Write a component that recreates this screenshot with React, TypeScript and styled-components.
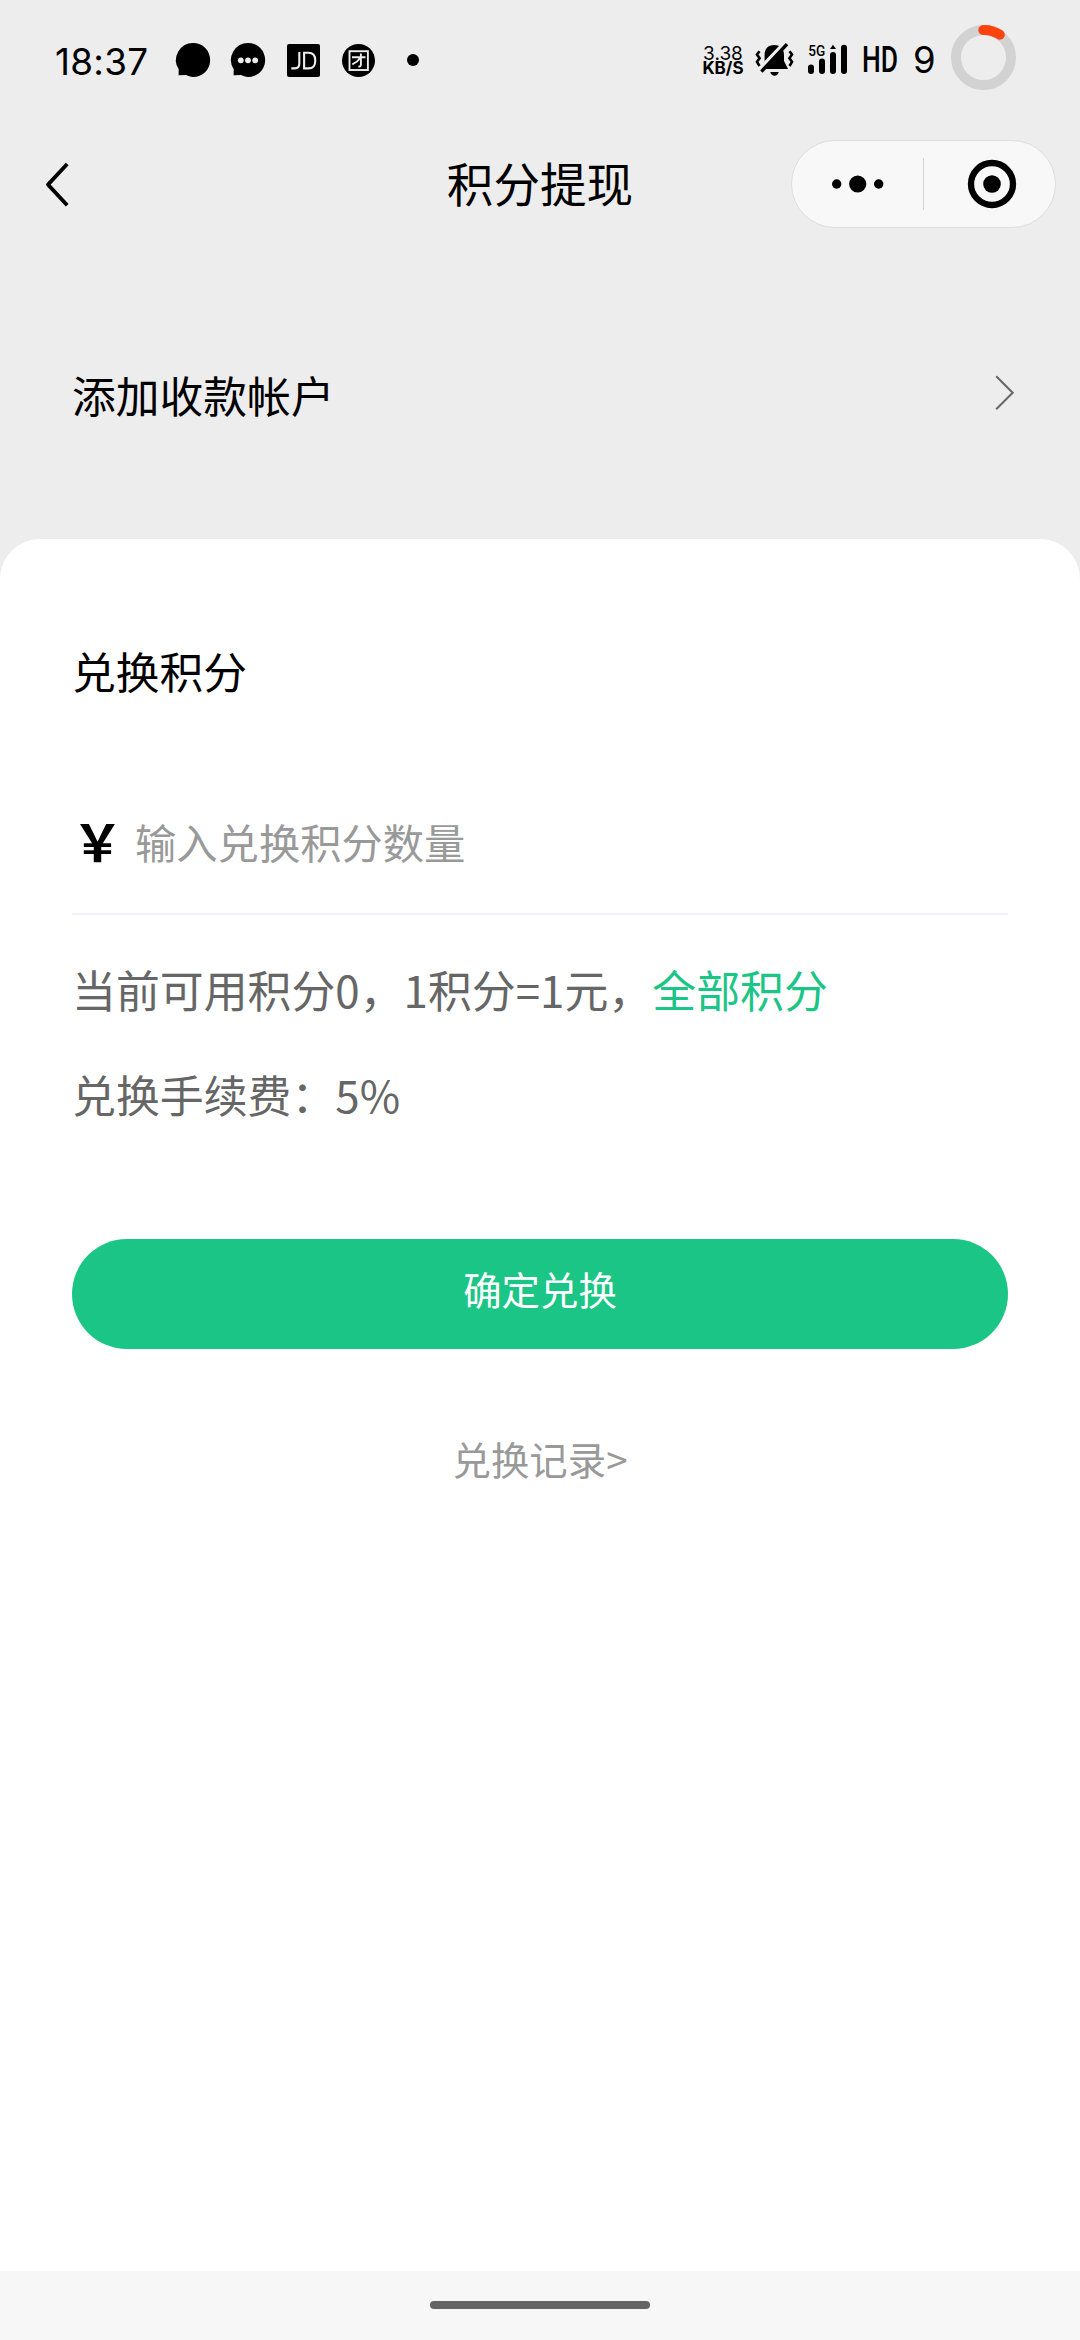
import React from "react";
import styled, { createGlobalStyle } from "styled-components";

const cjk = `"Noto Sans CJK SC", sans-serif`;
const latin = `Inter, "Noto Sans CJK SC", sans-serif`;

const GlobalStyle = createGlobalStyle`
  * { box-sizing: border-box; }
  body { margin: 0; background: #ededed; }
`;

const Screen = styled.div`
  width: 1080px;
  height: 2340px;
  display: flex;
  flex-direction: column;
  overflow: hidden;
  background: #ededed;
  color: #000;
  font-family: ${cjk};
`;

const StatusBar = styled.header`
  height: 120px;
  flex: none;
  display: flex;
  justify-content: space-between;
  padding: 0 64px 0 55px;
  font-family: ${latin};
`;

const StatusGroup = styled.div`
  display: flex;
  align-items: center;
  height: 120px;
`;

const Clock = styled.span`
  width: 121px;
  padding-top: 3px;
  font-size: 36.8px;
  font-weight: 400;
  line-height: 44px;
  letter-spacing: 0.3px;
  white-space: nowrap;
`;

const Icon = styled.svg<{ $gap?: number }>`
  display: block;
  flex: none;
  margin-right: ${(p) => p.$gap ?? 0}px;
  overflow: visible;
`;

const Speed = styled.div`
  display: flex;
  flex-direction: column;
  align-items: center;
  width: 42px;
  margin-right: 11px;
  padding-top: 2px;
`;

const SpeedLine = styled.span<{ $bold?: boolean }>`
  font-size: ${(p) => (p.$bold ? 17 : 19)}px;
  font-weight: ${(p) => (p.$bold ? 700 : 400)};
  line-height: 15.4px;
  white-space: nowrap;
`;

const Level = styled.span`
  width: 38px;
  font-size: 36.5px;
  line-height: 44px;
  font-weight: 400;
`;

const NavBar = styled.nav`
  height: 129px;
  flex: none;
  display: grid;
  grid-template-columns: 289px 1fr 265px;
  align-items: center;
  padding: 0 24px 0 0;
`;

const BackButton = styled.button`
  border: 0;
  background: none;
  padding: 0 0 0 44px;
  height: 60px;
`;

const Title = styled.h1`
  margin: 0;
  padding-bottom: 5px;
  font-size: 46.6px;
  font-weight: 400;
  line-height: 60px;
  text-align: center;
`;

const Capsule = styled.div`
  height: 88px;
  margin-bottom: 2px;
  display: grid;
  grid-template-columns: 1fr 1px 1fr;
  align-items: center;
  justify-items: center;
  border: 1px solid #dedede;
  border-radius: 44px;
  background: #f8f8f8;
`;

const CapsuleDivider = styled.span`
  width: 1px;
  height: 52px;
  background: #d4d4d4;
`;

const AccountRow = styled.section`
  height: 290px;
  flex: none;
  display: flex;
  align-items: center;
  justify-content: space-between;
  padding: 0 64px 1px 72px;
`;

const Label = styled.h2`
  margin: 0;
  font-size: 43.75px;
  font-weight: 400;
  line-height: 64px;
`;

const Sheet = styled.main`
  flex: 1;
  display: flex;
  flex-direction: column;
  padding: 99px 72px 0;
  border-radius: 40px 40px 0 0;
  background: #fff;
`;

const AmountField = styled.div`
  display: flex;
  align-items: center;
  height: 144px;
  margin-top: 69px;
  padding-bottom: 3px;
  border-bottom: 2px solid #f2f0ff;
`;

const Currency = styled.span`
  width: 63px;
  padding-bottom: 2px;
  font: 700 51px/60px ${cjk};
`;

const Placeholder = styled.span`
  font-size: 41.3px;
  line-height: 60px;
  color: #999;
`;

const Note = styled.p<{ $top: number }>`
  margin: ${(p) => p.$top}px 0 0;
  font-size: 43.9px;
  line-height: 64px;
  color: #666;
  white-space: nowrap;
`;

const Link = styled.span`
  color: #1bc586;
`;

const Submit = styled.button`
  height: 110px;
  margin-top: 113px;
  padding: 0 0 13px;
  border: 0;
  border-radius: 55px;
  background: #1bc586;
  color: #fff;
  font: 400 38.4px/56px ${cjk};
`;

const History = styled.a`
  margin-top: 81px;
  font-size: 38.4px;
  line-height: 56px;
  text-align: center;
  color: #999;
`;

const HomeBar = styled.footer`
  height: 69px;
  flex: none;
  display: flex;
  justify-content: center;
  padding-top: 30px;
  background: #f7f7f7;
`;

const HomePill = styled.span`
  width: 220px;
  height: 8px;
  border-radius: 4px;
  background: #646464;
`;

const BUBBLE =
  "M17.3 0A17 17 0 1 1 17 34C14.4 34 12.2 33.2 10.2 32.1L2.6 32.3L2.7 26.2A17 17 0 0 1 17.3 0Z";

function Bubble({ dots, gap }: { dots?: boolean; gap: number }) {
  return (
    <Icon width="34" height="34" viewBox="0 0 34 34" $gap={gap}>
      <path d={BUBBLE} />
      {dots && [9.8, 17, 24.2].map((x) => <circle key={x} cx={x} cy="17.3" r="2.9" fill="#ededed" />)}
    </Icon>
  );
}

export default function App() {
  return (
    <>
      <GlobalStyle />
      <Screen>
        <StatusBar>
          <StatusGroup>
            <Clock>18:37</Clock>
            <Bubble gap={21} />
            <Bubble dots gap={22} />
            <Icon width="33" height="33" viewBox="0 0 33 33" $gap={22}>
              <rect width="33" height="33" rx="2" />
              <g fill="none" stroke="#ededed" strokeWidth="2.1">
                <path d="M12.3 8V19.5Q12.3 24.4 7.5 24.4H4.3" />
                <path d="M17.1 8.7H21.5C26.7 8.7 28.3 12 28.3 16.4C28.3 21 26.5 24.4 21.5 24.4H17.1Z" />
              </g>
            </Icon>
            <Icon width="33" height="33" viewBox="0 0 33 33" $gap={32}>
              <circle cx="16.5" cy="16.5" r="16.5" />
              <g fill="none" stroke="#ededed" strokeWidth="1.9">
                <rect x="7.5" y="7.2" width="18.4" height="18.8" />
                <path d="M10 13.2H23.5M18.9 9.6V20.8Q18.9 22.7 16.4 22.5M18.6 13.5Q15.5 18.2 10.3 20.4" />
              </g>
            </Icon>
            <Icon width="12" height="12" viewBox="0 0 12 12">
              <circle cx="6" cy="6" r="6" />
            </Icon>
          </StatusGroup>
          <StatusGroup>
            <Speed>
              <SpeedLine>3.38</SpeedLine>
              <SpeedLine $bold>KB/S</SpeedLine>
            </Speed>
            <Icon width="38" height="34" viewBox="0 0 38 34" $gap={14}>
              <path d="M19.3 2C12.8 2 9.6 6 9.6 12V18L5.6 26H33L29 18V12C29 6 25.8 2 19.3 2Z" />
              <path d="M15.3 29H23.7Q22.8 32.8 19.5 32.8T15.3 29Z" />
              <path d="M3.8 26.6L30.5 -1.2" stroke="#ededed" strokeWidth="3.4" />
              <path d="M6.4 28.6L32 1.2" stroke="#000" strokeWidth="3.4" />
              <path
                d="M4.5 8.2L2 11.6L4.6 15.2L2 18.8L4.5 23M34.5 8.2L37 11.6L34.4 15.2L37 18.8L34.5 23"
                fill="none"
                stroke="#000"
                strokeWidth="2.6"
              />
            </Icon>
            <Icon width="40" height="30" viewBox="-1 0.5 40 30" $gap={16}>
              <text x="0.2" y="11.3" fontSize="15.5" fontWeight="500" fontFamily="Roboto, sans-serif" textLength="17" lengthAdjust="spacingAndGlyphs">
                5G
              </text>
              <rect x="0" y="20" width="6" height="9.5" rx="3" />
              <rect x="11" y="14" width="6" height="15.5" rx="3" />
              <rect x="22" y="7.5" width="6" height="22" rx="3" />
              <path d="M25 0.2L28 4.6H22Z" />
              <rect x="33" y="0.3" width="6" height="29.2" rx="3" />
            </Icon>
            <Icon width="33" height="26" viewBox="-0.5 0 33 26" $gap={17}>
              <text x="-1.5" y="25.3" fontSize="36" fontWeight="500" fontFamily="Roboto, sans-serif" textLength="36" lengthAdjust="spacingAndGlyphs">
                HD
              </text>
            </Icon>
            <Level>9</Level>
            <Icon width="65" height="65" viewBox="0 0 65 65">
              <circle cx="32.5" cy="29.5" r="27.5" fill="none" stroke="#d2d2d2" strokeWidth="10" />
              <path d="M32.3 2A27.5 27.5 0 0 1 48.8 6.7" fill="none" stroke="#fb4310" strokeWidth="10" strokeLinecap="round" />
            </Icon>
          </StatusGroup>
        </StatusBar>

        <NavBar>
          <BackButton aria-label="返回">
            <Icon width="26" height="48" viewBox="0 0 26 48">
              <path d="M23.2 3L4 23.6L23.2 44.2" fill="none" stroke="#000" strokeWidth="3.8" strokeLinejoin="round" />
            </Icon>
          </BackButton>
          <Title>积分提现</Title>
          <Capsule>
            <Icon width="52" height="18" viewBox="0 0 52 18">
              <circle cx="4.7" cy="9" r="4.7" />
              <circle cx="25.7" cy="9" r="8.6" />
              <circle cx="46.7" cy="9" r="4.7" />
            </Icon>
            <CapsuleDivider />
            <Icon width="50" height="50" viewBox="-2 0 50 50">
              <circle cx="25" cy="25" r="21" fill="none" stroke="#000" strokeWidth="6.3" />
              <circle cx="25" cy="25" r="8.8" />
            </Icon>
          </Capsule>
        </NavBar>

        <AccountRow>
          <Label>添加收款帐户</Label>
          <Icon width="20" height="36" viewBox="0.8 1.3 20 36">
            <path d="M1 1.5L17.5 18L1 34.5" fill="none" stroke="#666" strokeWidth="2" />
          </Icon>
        </AccountRow>

        <Sheet>
          <Label>兑换积分</Label>
          <AmountField>
            <Currency>￥</Currency>
            <Placeholder>输入兑换积分数量</Placeholder>
          </AmountField>
          <Note $top={42}>
            当前可用积分0，1积分=1元，<Link>全部积分</Link>
          </Note>
          <Note $top={41}>兑换手续费：5%</Note>
          <Submit>确定兑换</Submit>
          <History>兑换记录&gt;</History>
        </Sheet>

        <HomeBar>
          <HomePill />
        </HomeBar>
      </Screen>
    </>
  );
}
